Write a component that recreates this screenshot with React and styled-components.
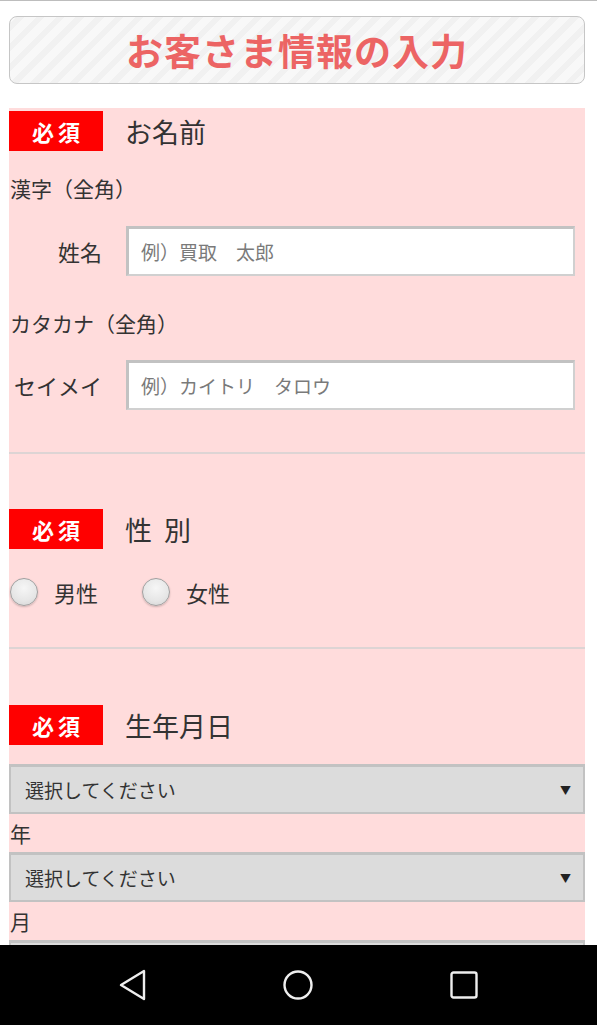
import styled, { createGlobalStyle } from "styled-components";

const GlobalStyle = createGlobalStyle`
  body {
    margin: 0;
    background: #ffffff;
    font-family: "Noto Sans CJK JP", "Noto Sans", sans-serif;
    color: #333333;
  }
`;

const Page = styled.div`
  height: 1025px;
  display: flex;
  flex-direction: column;
  overflow: hidden;
`;

const Content = styled.div`
  flex: 1;
  overflow: hidden;
  border-top: 1px solid #bdbdbd;
  padding: 0 12px 0 9px;
`;

const TitleBox = styled.div`
  margin-top: 15px;
  height: 66px;
  border: 1px solid #c6c6c6;
  border-radius: 8px;
  background: repeating-linear-gradient(
    -45deg,
    #f8f8f8 0px,
    #f8f8f8 8px,
    #f1f1f1 8px,
    #f1f1f1 14px
  );
  display: flex;
  align-items: center;
  justify-content: center;
`;

const Title = styled.h1`
  margin: 0;
  font-size: 37px;
  font-weight: 700;
  letter-spacing: 1px;
  color: #ec6464;
`;

const Form = styled.div`
  margin-top: 24px;
  background: #ffdcdc;
`;

const Section = styled.div`
  padding-top: ${(p) => p.$top}px;
  padding-bottom: ${(p) => p.$bottom}px;
  border-bottom: ${(p) => (p.$last ? "none" : "2px solid #ddd4d4")};
`;

const HeadRow = styled.div`
  display: flex;
  align-items: center;
  gap: 22px;
  height: 40px;
`;

const Badge = styled.span`
  width: 94px;
  height: 40px;
  background: #ff0000;
  color: #ffffff;
  font-size: 22px;
  font-weight: 700;
  letter-spacing: 4px;
  display: flex;
  align-items: center;
  justify-content: center;
  padding-left: 4px;
  box-sizing: border-box;
`;

const Heading = styled.span`
  font-size: 27px;
  color: #333333;
`;

const SubLabel = styled.div`
  margin-top: ${(p) => p.$top}px;
  padding-left: 1px;
  font-size: 21px;
  line-height: 30px;
`;

const FieldRow = styled.div`
  margin-top: ${(p) => p.$top}px;
  display: flex;
  align-items: center;
  gap: 24px;
  padding-right: 10px;
`;

const FieldLabel = styled.span`
  width: 93px;
  text-align: right;
  font-size: 22px;
  white-space: nowrap;
`;

const TextInput = styled.input`
  flex: 1;
  height: 50px;
  box-sizing: border-box;
  background: #ffffff;
  border-style: solid;
  border-width: 3px 2px 2px 3px;
  border-color: #c2c2c2 #d0d0d0 #d0d0d0 #c2c2c2;
  padding: 0 12px;
  font-family: inherit;
  font-size: 19px;
  color: #333333;
  outline: none;

  &::placeholder {
    color: #7a7a7a;
  }
`;

const RadioRow = styled.div`
  margin-top: 28px;
  display: flex;
  align-items: center;
  height: 30px;
  padding-left: 1px;
`;

const RadioItem = styled.label`
  display: flex;
  align-items: center;
  gap: 16px;
  margin-right: 44px;
  font-size: 22px;
`;

const RadioDot = styled.span`
  width: 26px;
  height: 26px;
  border-radius: 50%;
  border: 1px solid #a0a0a0;
  background: radial-gradient(circle at 50% 35%, #f6f6f6 0%, #e6e6e6 60%, #d2d2d2 100%);
  box-shadow: 0 1px 2px rgba(0, 0, 0, 0.2);
`;

const SelectBox = styled.div`
  margin-top: ${(p) => p.$top}px;
  height: 50px;
  box-sizing: border-box;
  background: #dcdcdc;
  border-style: solid;
  border-width: 3px 2px 2px 2px;
  border-color: #c2c2c2;
  display: flex;
  align-items: center;
  justify-content: space-between;
  padding: 0 12px 0 14px;
  font-size: 19px;
  color: #333333;
`;

const Arrow = styled.span`
  font-size: 11px;
  color: #222222;
`;

const DateLabel = styled.div`
  height: 38px;
  display: flex;
  align-items: center;
  font-size: 21px;
  padding-left: 1px;
`;

const NavBar = styled.div`
  height: 80px;
  background: #000000;
  display: flex;
  align-items: center;
  justify-content: space-around;
  padding: 0 50px;
`;

const NavIcon = styled.svg`
  width: 32px;
  height: 32px;
  fill: none;
  stroke: #eeeeee;
  stroke-width: 2.4;
  stroke-linejoin: round;
`;

const Required = ({ children }) => (
  <HeadRow>
    <Badge>必須</Badge>
    <Heading>{children}</Heading>
  </HeadRow>
);

const Select = ({ top }) => (
  <SelectBox $top={top}>
    <span>選択してください</span>
    <Arrow>▼</Arrow>
  </SelectBox>
);

const App = () => {
  return (
    <Page>
      <GlobalStyle />
      <Content>
        <TitleBox>
          <Title>お客さま情報の入力</Title>
        </TitleBox>
        <Form>
          <Section $top={3} $bottom={42}>
            <Required>お名前</Required>
            <SubLabel $top={22}>漢字（全角）</SubLabel>
            <FieldRow $top={23}>
              <FieldLabel>姓名</FieldLabel>
              <TextInput placeholder="例）買取　太郎" />
            </FieldRow>
            <SubLabel $top={32}>カタカナ（全角）</SubLabel>
            <FieldRow $top={22}>
              <FieldLabel>セイメイ</FieldLabel>
              <TextInput placeholder="例）カイトリ　タロウ" />
            </FieldRow>
          </Section>
          <Section $top={55} $bottom={40}>
            <Required>性&nbsp;&nbsp;別</Required>
            <RadioRow>
              <RadioItem>
                <RadioDot />
                男性
              </RadioItem>
              <RadioItem>
                <RadioDot />
                女性
              </RadioItem>
            </RadioRow>
          </Section>
          <Section $top={56} $bottom={0} $last>
            <Required>生年月日</Required>
            <Select top={19} />
            <DateLabel>年</DateLabel>
            <Select top={0} />
            <DateLabel>月</DateLabel>
            <Select top={0} />
          </Section>
        </Form>
      </Content>
      <NavBar>
        <NavIcon viewBox="0 0 32 32">
          <path d="M27 2 L27 30 L4 16 Z" />
        </NavIcon>
        <NavIcon viewBox="0 0 32 32">
          <circle cx="16" cy="16" r="13.5" />
        </NavIcon>
        <NavIcon viewBox="0 0 32 32">
          <rect x="3.5" y="3.5" width="25" height="25" rx="2" />
        </NavIcon>
      </NavBar>
    </Page>
  );
};

export default App;
